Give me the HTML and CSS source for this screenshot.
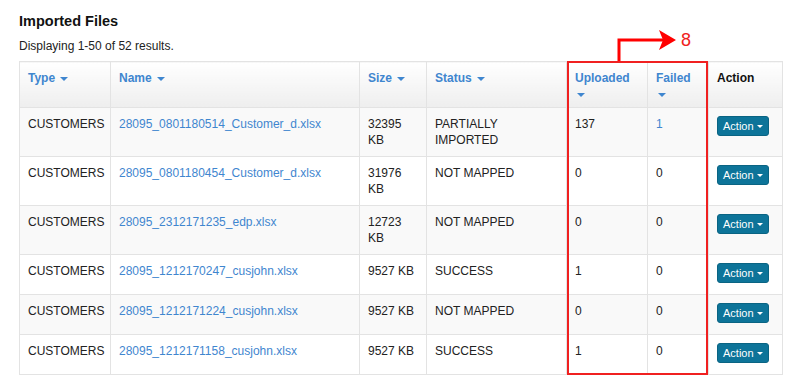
FILE: index.html
```html
<!DOCTYPE html>
<html lang="en">
<head>
  <meta charset="UTF-8">
  <meta name="viewport" content="width=device-width, initial-scale=1.0">
  <title>Imported Files</title>
  <link rel="stylesheet" href="styles.css">
</head>
<body>
  <!-- Topo -->
  <h3 class="page-title">Imported Files</h3>
  <div class="summary">Displaying 1-50 of 52 results.</div>

  <div class="grid-wrap">
    <table class="files-table">
      <colgroup>
        <col style="width: 91px">
        <col style="width: 249px">
        <col style="width: 67px">
        <col style="width: 140px">
        <col style="width: 81px">
        <col style="width: 61px">
        <col style="width: 74px">
      </colgroup>
      <thead>
        <tr>
          <th><a href="#">Type <span class="caret"></span></a></th>
          <th><a href="#">Name <span class="caret"></span></a></th>
          <th><a href="#">Size <span class="caret"></span></a></th>
          <th><a href="#">Status <span class="caret"></span></a></th>
          <th><a href="#">Uploaded<br><span class="caret"></span></a></th>
          <th><a href="#">Failed<br><span class="caret"></span></a></th>
          <th>Action</th>
        </tr>
      </thead>
      <tbody>
        <tr>
          <td>CUSTOMERS</td>
          <td><a href="#">28095_0801180514_Customer_d.xlsx</a></td>
          <td>32395 KB</td>
          <td>PARTIALLY IMPORTED</td>
          <td>137</td>
          <td><a href="#">1</a></td>
          <td><button class="btn-action">Action <span class="caret"></span></button></td>
        </tr>
        <tr>
          <td>CUSTOMERS</td>
          <td><a href="#">28095_0801180454_Customer_d.xlsx</a></td>
          <td>31976 KB</td>
          <td>NOT MAPPED</td>
          <td>0</td>
          <td>0</td>
          <td><button class="btn-action">Action <span class="caret"></span></button></td>
        </tr>
        <tr>
          <td>CUSTOMERS</td>
          <td><a href="#">28095_2312171235_edp.xlsx</a></td>
          <td>12723 KB</td>
          <td>NOT MAPPED</td>
          <td>0</td>
          <td>0</td>
          <td><button class="btn-action">Action <span class="caret"></span></button></td>
        </tr>
        <tr>
          <td>CUSTOMERS</td>
          <td><a href="#">28095_1212170247_cusjohn.xlsx</a></td>
          <td>9527 KB</td>
          <td>SUCCESS</td>
          <td>1</td>
          <td>0</td>
          <td><button class="btn-action">Action <span class="caret"></span></button></td>
        </tr>
        <tr>
          <td>CUSTOMERS</td>
          <td><a href="#">28095_1212171224_cusjohn.xlsx</a></td>
          <td>9527 KB</td>
          <td>NOT MAPPED</td>
          <td>0</td>
          <td>0</td>
          <td><button class="btn-action">Action <span class="caret"></span></button></td>
        </tr>
        <tr>
          <td>CUSTOMERS</td>
          <td><a href="#">28095_1212171158_cusjohn.xlsx</a></td>
          <td>9527 KB</td>
          <td>SUCCESS</td>
          <td>1</td>
          <td>0</td>
          <td><button class="btn-action">Action <span class="caret"></span></button></td>
        </tr>
      </tbody>
    </table>

    <!-- Anotação -->
    <div class="highlight-box"></div>
    <svg class="callout" viewBox="0 0 80 32" width="80" height="32">
      <path d="M2 32 V11 H46" fill="none" stroke="#f00" stroke-width="3"/>
      <polygon points="42,1 59,11 42,21 46,11" fill="#f00"/>
    </svg>
    <span class="callout-num">8</span>
  </div>
</body>
</html>
```

FILE: styles.css
```css
/* Reset & Base */
:root {
  --text-color: #222222;
  --link-color: #3f86cf;
  --border-color: #e3e3e3;
  --stripe-color: #f9f9f9;
  --btn-color: #0d7499;
  --mark-color: #f02020;
}

* {
  margin: 0;
  padding: 0;
  box-sizing: border-box;
}

body {
  font-family: "Liberation Sans", Arial, sans-serif;
  font-size: 12px;
  color: var(--text-color);
  background-color: #ffffff;
  padding: 13px 18px 0 19px;
  line-height: 16px;
}

a {
  color: var(--link-color);
  text-decoration: none;
}

/* Topo */
.page-title {
  font-size: 14.5px;
  font-weight: 700;
  line-height: 16px;
  margin-bottom: 9px;
  color: #111111;
}

.summary {
  margin-bottom: 7px;
}

/* Tabela */
.grid-wrap {
  position: relative;
  width: 763px;
}

.files-table {
  width: 763px;
  table-layout: fixed;
  border-collapse: collapse;
  border: 1px solid var(--border-color);
}

.files-table th,
.files-table td {
  text-align: left;
  vertical-align: top;
  padding: 8px;
  border: 1px solid var(--border-color);
}

.files-table th {
  padding-bottom: 5px;
  font-weight: 700;
  background: linear-gradient(#ffffff, #eeeeee);
  color: #111111;
}

.files-table tbody tr:nth-child(odd) td {
  background-color: var(--stripe-color);
}

.caret {
  display: inline-block;
  width: 0;
  height: 0;
  margin-left: 2px;
  vertical-align: middle;
  border-top: 4px solid;
  border-left: 4px solid transparent;
  border-right: 4px solid transparent;
}

/* Botão Action */
.btn-action {
  display: inline-flex;
  align-items: center;
  gap: 3px;
  height: 20px;
  padding: 0 5px;
  margin-bottom: 3px;
  vertical-align: top;
  font-family: inherit;
  font-size: 11px;
  color: #ffffff;
  background-color: var(--btn-color);
  border: 1px solid #0a6483;
  border-radius: 3px;
  cursor: pointer;
}

.btn-action .caret {
  margin-left: 0;
  border-top-width: 3px;
  border-left-width: 3px;
  border-right-width: 3px;
}

/* Anotação */
.highlight-box {
  position: absolute;
  left: 548px;
  top: 0;
  width: 141px;
  height: 314px;
  border: 2px solid var(--mark-color);
  pointer-events: none;
}

.callout {
  position: absolute;
  left: 598px;
  top: -32px;
}

.callout-num {
  position: absolute;
  left: 662px;
  top: -30px;
  font-size: 18px;
  line-height: 18px;
  color: var(--mark-color);
}
```
